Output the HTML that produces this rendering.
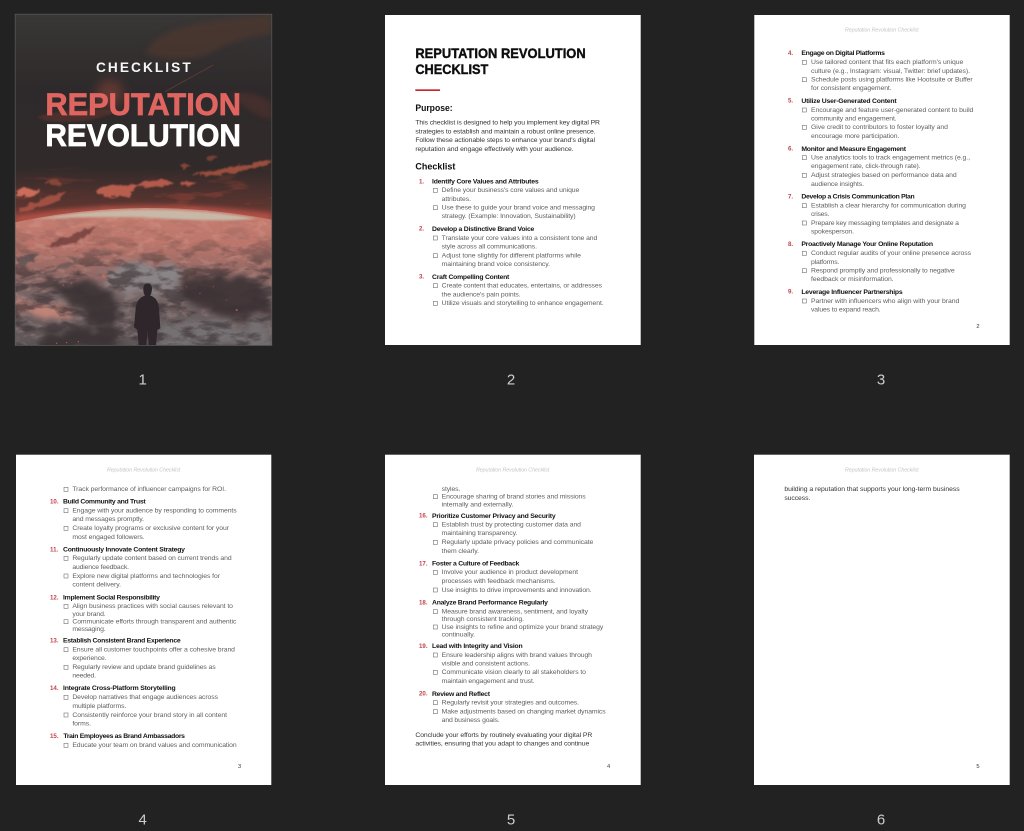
<!DOCTYPE html>
<html lang="en"><head><meta charset="utf-8"><title>Reputation Revolution Checklist</title>
<style>
html,body{margin:0;padding:0;background:#222;width:1024px;height:831px;overflow:hidden}
svg{display:block}
text{font-family:"Liberation Sans",sans-serif;dominant-baseline:central;white-space:pre}
.b{font-size:20.500px;fill:#5e5e5e;dominant-baseline:middle}
.t{font-size:20.500px;font-weight:700;fill:#141414;dominant-baseline:middle}
.n{font-size:18.500px;font-weight:700;fill:#c2434c;dominant-baseline:middle}
.h{font-size:16px;font-style:italic;fill:#c4c4c4;dominant-baseline:middle}
.p{font-size:20.500px;fill:#343434;dominant-baseline:middle}
.pg{font-size:17px;fill:#333}
.l{font-size:15px;fill:#cdcdcd;text-anchor:middle}
.x{fill:none;stroke:#6a6a6a;stroke-width:1.7}
.tx{filter:url(#soft)}
</style></head>
<body>
<svg width="1024" height="831" viewBox="0 0 1024 831" xmlns="http://www.w3.org/2000/svg">
<defs>
<filter id="soft" x="-2%" y="-2%" width="104%" height="104%"><feGaussianBlur stdDeviation=".9"/></filter>
<filter id="b3" x="-30%" y="-30%" width="160%" height="160%"><feGaussianBlur stdDeviation="3"/></filter>
<filter id="b8" x="-30%" y="-30%" width="160%" height="160%"><feGaussianBlur stdDeviation="8"/></filter>
<filter id="b16" x="-40%" y="-40%" width="180%" height="180%"><feGaussianBlur stdDeviation="16"/></filter>
<filter id="rough" x="-5%" y="-5%" width="110%" height="110%" color-interpolation-filters="sRGB">
<feTurbulence type="fractalNoise" baseFrequency=".035 .06" numOctaves="4" seed="4" result="n"/>
<feDisplacementMap in="SourceGraphic" in2="n" scale="22" xChannelSelector="R" yChannelSelector="G"/>
<feGaussianBlur stdDeviation="2.500"/></filter>
<filter id="roughB" x="-5%" y="-5%" width="110%" height="110%" color-interpolation-filters="sRGB">
<feTurbulence type="fractalNoise" baseFrequency=".02 .035" numOctaves="5" seed="11" result="n"/>
<feDisplacementMap in="SourceGraphic" in2="n" scale="70" xChannelSelector="R" yChannelSelector="G"/>
<feGaussianBlur stdDeviation="9"/></filter>
<filter id="cl" x="0" y="0" width="100%" height="100%" color-interpolation-filters="sRGB">
<feTurbulence type="fractalNoise" baseFrequency=".008 .04" numOctaves="5" seed="8"/>
<feColorMatrix values="0 0 0 0 .56 0 0 0 0 .26 0 0 0 0 .22 6 0 0 0 -3.500"/></filter>
<filter id="dk" x="0" y="0" width="100%" height="100%" color-interpolation-filters="sRGB">
<feTurbulence type="fractalNoise" baseFrequency=".012 .03" numOctaves="5" seed="21"/>
<feColorMatrix values="0 0 0 0 .24 0 0 0 0 .20 0 0 0 0 .21 6 0 0 0 -2.800"/></filter>
<filter id="wh" x="0" y="0" width="100%" height="100%" color-interpolation-filters="sRGB">
<feTurbulence type="fractalNoise" baseFrequency=".03 .06" numOctaves="4" seed="5"/>
<feColorMatrix values="0 0 0 0 .88 0 0 0 0 .70 0 0 0 0 .65 5 0 0 0 -2.500"/></filter>
<linearGradient id="sky" x1="0" y1="0" x2="0" y2="1">
<stop offset="0" stop-color="#393636"/><stop offset=".35" stop-color="#2e2a2b"/><stop offset=".72" stop-color="#312a2a"/><stop offset=".9" stop-color="#5c3530"/><stop offset="1" stop-color="#b04e44"/></linearGradient>
<linearGradient id="earth" x1="0" y1="0" x2="0" y2="1">
<stop offset="0" stop-color="#c87f72"/><stop offset=".25" stop-color="#bd766b"/><stop offset=".45" stop-color="#976a65"/><stop offset=".65" stop-color="#726364"/><stop offset="1" stop-color="#5c5557"/></linearGradient>
<linearGradient id="mk" x1="0" y1="0" x2="0" y2="1"><stop offset="0" stop-color="#000"/><stop offset=".7" stop-color="#000"/><stop offset=".84" stop-color="#888"/><stop offset="1" stop-color="#aaa"/></linearGradient>
<mask id="mSky" maskUnits="userSpaceOnUse" x="45" y="42" width="770" height="640"><rect x="45" y="42" width="770" height="640" fill="url(#mk)"/></mask>
<linearGradient id="mk2" x1="0" y1="0" x2="0" y2="1"><stop offset="0" stop-color="#000"/><stop offset=".2" stop-color="#333"/><stop offset=".5" stop-color="#fff"/></linearGradient>
<mask id="mDk" maskUnits="userSpaceOnUse" x="45" y="625" width="770" height="411"><rect x="45" y="625" width="770" height="411" fill="url(#mk2)"/></mask>
<clipPath id="cov"><rect x="45" y="42" width="770" height="994"/></clipPath>
<clipPath id="glob"><path d="M45 667Q430 585 815 659V1036H45Z"/></clipPath>
</defs>
<rect width="1024" height="831" fill="#222"/>

<!-- Cover -->
<g transform="scale(.33333)">
<g clip-path="url(#cov)">
<rect x="45" y="42" width="770" height="640" fill="url(#sky)"/>
<path d="M435 160Q470 90 600 70Q720 50 815 45V100Q700 115 620 165Q520 190 435 160Z" fill="#50382f" opacity=".7" filter="url(#b8)"/>
<path d="M690 280Q770 270 815 310V360Q740 340 690 280Z" fill="#4e332d" opacity=".7" filter="url(#b8)"/>
<path d="M110 350Q220 320 360 330Q280 370 190 365Q140 370 110 350Z" fill="#5e352e" opacity=".6" filter="url(#b3)"/>
<circle cx="330" cy="280" r="40" fill="#8c4538" opacity=".55" filter="url(#b16)"/>
<path d="M495 275L640 195" stroke="#6e453c" stroke-width="2.500" opacity=".7"/>
<rect x="45" y="42" width="770" height="640" filter="url(#cl)" mask="url(#mSky)"/>
<g filter="url(#rough)" fill="#a85346">
<path d="M48 572Q85 560 115 568L108 585Q75 592 48 588Z" fill="#cc6c5a"/>
<path d="M60 625Q140 590 200 575L180 600Q120 625 60 640Z" opacity=".9"/>
<path d="M290 565Q340 555 410 550L390 590Q330 595 290 580Z" fill="#b85e4e"/>
<path d="M410 550Q470 535 530 548L500 560Q450 560 410 560Z" fill="#b45a4b"/>
<path d="M540 548Q570 540 590 545L570 560L540 560Z" fill="#b0584a"/>
<path d="M580 520Q680 505 810 478L805 495Q700 520 620 530Z" fill="#9a4e3e"/>
<path d="M540 495Q565 490 575 495L550 510Z" fill="#86463a"/>
<path d="M620 470Q640 465 655 470L630 485Z" fill="#724036"/>
<path d="M135 545Q165 535 190 550L150 555Z" fill="#864639"/>
</g>
<path d="M45 652Q430 585 815 643V665H45Z" fill="#bd5549" opacity=".85" filter="url(#b8)"/>
<path d="M45 667Q430 585 815 659V1036H45Z" fill="url(#earth)"/>
<g clip-path="url(#glob)">
<rect x="45" y="620" width="770" height="416" filter="url(#wh)" opacity=".2"/>
<g filter="url(#roughB)">
<path d="M300 815Q440 770 530 800Q560 850 510 890Q430 890 340 860Z" fill="#8a8486"/>
<path d="M170 860Q250 830 330 870Q370 940 340 985Q250 950 190 900Z" fill="#403739"/>
<path d="M110 1000Q220 970 340 990L390 1050H120Z" fill="#3e3638"/>
<path d="M540 840Q640 800 740 845Q815 865 815 945Q740 945 690 955Q590 930 540 875Z" fill="#433739"/>
<path d="M48 910Q110 885 200 935L220 960Q130 950 48 945Z" fill="#c08479"/>
<path d="M480 980Q610 940 815 985V1045H480Z" fill="#757072"/>
</g>
<rect x="45" y="625" width="770" height="411" filter="url(#dk)" mask="url(#mDk)" opacity=".65"/>
<path d="M90 660Q430 600 770 655Q680 668 430 652Q220 648 90 660Z" fill="#c9bcaa" opacity=".95" filter="url(#b3)"/>
<g filter="url(#rough)" opacity=".75">
<path d="M130 740Q200 705 290 680L280 690Q260 720 200 735Z" fill="#693a38"/>
<path d="M48 775Q90 755 118 758L100 785L50 800Z" fill="#544c50"/>
<path d="M48 850Q160 805 250 770L215 795Q120 830 48 860Z" fill="#655355"/>
<path d="M290 822Q340 812 395 818L350 826Z" fill="#4a4447"/>
</g>
<circle cx="311" cy="827" r="5" fill="#e0705c" filter="url(#b3)"/>
<g fill="#d8604e" opacity=".8"><circle cx="215" cy="850" r="2"/><circle cx="190" cy="855" r="2"/><circle cx="560" cy="860" r="1.600"/><circle cx="600" cy="880" r="1.600"/><circle cx="640" cy="860" r="1.600"/><circle cx="680" cy="900" r="1.600"/><circle cx="710" cy="930" r="3"/><circle cx="170" cy="1030" r="2"/><circle cx="200" cy="1028" r="2"/><circle cx="235" cy="1025" r="2"/></g>
</g>
<path d="M430 868Q430 850 443 850Q456 850 456 868Q455 880 450 887Q474 893 477 925L481 985L472 990L468 1036H446L443 992L439 1036H416L412 990L402 982L407 925Q410 895 435 887Q430 880 430 868Z" fill="#2d282b" filter="url(#soft)"/>
</g>
<rect x="45.500" y="42.500" width="770" height="994" fill="none" stroke="#5d5d5d" stroke-width="2"/>
<g filter="url(#soft)">
<text x="288" y="203" font-size="41" font-weight="700" fill="#f6f6f6" textLength="284" lengthAdjust="spacing">CHECKLIST</text>
<text x="136" y="312" font-size="95" font-weight="700" fill="#e06561" stroke="#e06561" stroke-width="2" textLength="587" lengthAdjust="spacingAndGlyphs">REPUTATION</text>
<text x="136" y="405" font-size="95" font-weight="700" fill="#fff" stroke="#fff" stroke-width="2" textLength="587" lengthAdjust="spacingAndGlyphs">REVOLUTION</text>
</g>
</g>

<!-- Page 2 -->
<rect x="385" y="15" width="255.700" height="330" fill="#fff"/>
<g transform="translate(380 10) scale(.33333)" class="tx">
<text x="106" y="130" font-size="41" font-weight="700" fill="#111" stroke="#111" stroke-width="1.200" textLength="511" lengthAdjust="spacingAndGlyphs">REPUTATION REVOLUTION</text>
<text x="106" y="178" font-size="41" font-weight="700" fill="#111" stroke="#111" stroke-width="1.200" textLength="219" lengthAdjust="spacingAndGlyphs">CHECKLIST</text>
<rect x="106" y="238" width="74" height="5" fill="#c9252d"/>
<text x="106" y="294" font-size="27" font-weight="700" fill="#111" textLength="112" lengthAdjust="spacingAndGlyphs">Purpose:</text>
<text class="p" x="106" y="338" textLength="554">This checklist is designed to help you implement key digital PR</text>
<text class="p" x="106" y="365" textLength="541">strategies to establish and maintain a robust online presence.</text>
<text class="p" x="106" y="391" textLength="539">Follow these actionable steps to enhance your brand's digital</text>
<text class="p" x="106" y="417" textLength="475">reputation and engage effectively with your audience.</text>
<text x="106" y="469" font-size="27" font-weight="700" fill="#111" textLength="120" lengthAdjust="spacingAndGlyphs">Checklist</text>
<text class="n" x="117" y="515">1.</text><text class="t" x="156" y="515" textLength="320">Identify Core Values and Attributes</text>
<rect class="x" x="160" y="535" width="12" height="12"/><text class="b" x="185" y="541" textLength="413">Define your business's core values and unique</text>
<text class="b" x="185" y="567" textLength="88">attributes.</text>
<rect class="x" x="160" y="587" width="12" height="12"/><text class="b" x="185" y="593" textLength="460">Use these to guide your brand voice and messaging</text>
<text class="b" x="185" y="619" textLength="402">strategy. (Example: Innovation, Sustainability)</text>
<text class="n" x="117" y="657">2.</text><text class="t" x="156" y="657" textLength="307">Develop a Distinctive Brand Voice</text>
<rect class="x" x="160" y="678" width="12" height="12"/><text class="b" x="185" y="684" textLength="467">Translate your core values into a consistent tone and</text>
<text class="b" x="185" y="710" textLength="286">style across all communications.</text>
<rect class="x" x="160" y="731" width="12" height="12"/><text class="b" x="185" y="737" textLength="418">Adjust tone slightly for different platforms while</text>
<text class="b" x="185" y="763" textLength="325">maintaining brand voice consistency.</text>
<text class="n" x="117" y="801">3.</text><text class="t" x="156" y="801" textLength="232">Craft Compelling Content</text>
<rect class="x" x="160" y="821" width="12" height="12"/><text class="b" x="185" y="827" textLength="481">Create content that educates, entertains, or addresses</text>
<text class="b" x="185" y="854" textLength="237">the audience's pain points.</text>
<rect class="x" x="160" y="874" width="12" height="12"/><text class="b" x="185" y="880" textLength="486">Utilize visuals and storytelling to enhance engagement.</text>
</g>

<!-- Page 3 -->
<rect x="754.300" y="15" width="255.400" height="330" fill="#fff"/>
<g transform="translate(750 10) scale(.33333)" class="tx">
<text class="h" x="285" y="61" textLength="221">Reputation Revolution Checklist</text>
<text class="n" x="114" y="130">4.</text><text class="t" x="154" y="130" textLength="251">Engage on Digital Platforms</text>
<rect class="x" x="157" y="151" width="12" height="12"/><text class="b" x="183" y="157" textLength="457">Use tailored content that fits each platform's unique</text>
<text class="b" x="183" y="183" textLength="477">culture (e.g., Instagram: visual, Twitter: brief updates).</text>
<rect class="x" x="157" y="203" width="12" height="12"/><text class="b" x="183" y="209" textLength="485">Schedule posts using platforms like Hootsuite or Buffer</text>
<text class="b" x="183" y="235" textLength="242">for consistent engagement.</text>
<text class="n" x="114" y="273">5.</text><text class="t" x="154" y="273" textLength="286">Utilize User-Generated Content</text>
<rect class="x" x="157" y="294" width="12" height="12"/><text class="b" x="183" y="300" textLength="487">Encourage and feature user-generated content to build</text>
<text class="b" x="183" y="326" textLength="257">community and engagement.</text>
<rect class="x" x="157" y="346" width="12" height="12"/><text class="b" x="183" y="352" textLength="411">Give credit to contributors to foster loyalty and</text>
<text class="b" x="183" y="378" textLength="265">encourage more participation.</text>
<text class="n" x="114" y="417">6.</text><text class="t" x="154" y="417" textLength="314">Monitor and Measure Engagement</text>
<rect class="x" x="157" y="437" width="12" height="12"/><text class="b" x="183" y="443" textLength="477">Use analytics tools to track engagement metrics (e.g.,</text>
<text class="b" x="183" y="469" textLength="329">engagement rate, click-through rate).</text>
<rect class="x" x="157" y="490" width="12" height="12"/><text class="b" x="183" y="496" textLength="437">Adjust strategies based on performance data and</text>
<text class="b" x="183" y="522" textLength="159">audience insights.</text>
<text class="n" x="114" y="560">7.</text><text class="t" x="154" y="560" textLength="340">Develop a Crisis Communication Plan</text>
<rect class="x" x="157" y="581" width="12" height="12"/><text class="b" x="183" y="587" textLength="465">Establish a clear hierarchy for communication during</text>
<text class="b" x="183" y="613" textLength="55">crises.</text>
<rect class="x" x="157" y="633" width="12" height="12"/><text class="b" x="183" y="639" textLength="444">Prepare key messaging templates and designate a</text>
<text class="b" x="183" y="665" textLength="129">spokesperson.</text>
<text class="n" x="114" y="703">8.</text><text class="t" x="154" y="703" textLength="395">Proactively Manage Your Online Reputation</text>
<rect class="x" x="157" y="724" width="12" height="12"/><text class="b" x="183" y="730" textLength="480">Conduct regular audits of your online presence across</text>
<text class="b" x="183" y="756" textLength="85">platforms.</text>
<rect class="x" x="157" y="776" width="12" height="12"/><text class="b" x="183" y="782" textLength="431">Respond promptly and professionally to negative</text>
<text class="b" x="183" y="808" textLength="248">feedback or misinformation.</text>
<text class="n" x="114" y="846">9.</text><text class="t" x="154" y="846" textLength="304">Leverage Influencer Partnerships</text>
<rect class="x" x="157" y="867" width="12" height="12"/><text class="b" x="183" y="873" textLength="445">Partner with influencers who align with your brand</text>
<text class="b" x="183" y="899" textLength="209">values to expand reach.</text>
<text class="pg" x="679" y="951">2</text>
</g>

<!-- Page 4 -->
<rect x="16" y="454.700" width="255.300" height="330.300" fill="#fff"/>
<g transform="translate(10 450) scale(.33333)" class="tx">
<text class="h" x="291" y="60" textLength="220">Reputation Revolution Checklist</text>
<rect class="x" x="162" y="112" width="12" height="12"/><text class="b" x="187" y="118" textLength="461">Track performance of influencer campaigns for ROI.</text>
<text class="n" x="120" y="155">10.</text><text class="t" x="159" y="155" textLength="248">Build Community and Trust</text>
<rect class="x" x="162" y="176" width="12" height="12"/><text class="b" x="187" y="182" textLength="493">Engage with your audience by responding to comments</text>
<text class="b" x="187" y="208" textLength="215">and messages promptly.</text>
<rect class="x" x="162" y="229" width="12" height="12"/><text class="b" x="187" y="235" textLength="470">Create loyalty programs or exclusive content for your</text>
<text class="b" x="187" y="261" textLength="217">most engaged followers.</text>
<text class="n" x="120" y="299">11.</text><text class="t" x="159" y="299" textLength="366">Continuously Innovate Content Strategy</text>
<rect class="x" x="162" y="319" width="12" height="12"/><text class="b" x="187" y="325" textLength="478">Regularly update content based on current trends and</text>
<text class="b" x="187" y="351" textLength="170">audience feedback.</text>
<rect class="x" x="162" y="372" width="12" height="12"/><text class="b" x="187" y="378" textLength="443">Explore new digital platforms and technologies for</text>
<text class="b" x="187" y="404" textLength="146">content delivery.</text>
<text class="n" x="120" y="443">12.</text><text class="t" x="159" y="443" textLength="291">Implement Social Responsibility</text>
<rect class="x" x="162" y="463" width="12" height="12"/><text class="b" x="187" y="469" textLength="482">Align business practices with social causes relevant to</text>
<text class="b" x="187" y="492" textLength="100">your brand.</text>
<rect class="x" x="162" y="509" width="12" height="12"/><text class="b" x="187" y="515" textLength="492">Communicate efforts through transparent and authentic</text>
<text class="b" x="187" y="538" textLength="100">messaging.</text>
<text class="n" x="120" y="572">13.</text><text class="t" x="159" y="572" textLength="353">Establish Consistent Brand Experience</text>
<rect class="x" x="162" y="593" width="12" height="12"/><text class="b" x="187" y="599" textLength="488">Ensure all customer touchpoints offer a cohesive brand</text>
<text class="b" x="187" y="625" textLength="103">experience.</text>
<rect class="x" x="162" y="646" width="12" height="12"/><text class="b" x="187" y="652" textLength="430">Regularly review and update brand guidelines as</text>
<text class="b" x="187" y="677" textLength="71">needed.</text>
<text class="n" x="120" y="715">14.</text><text class="t" x="159" y="715" textLength="338">Integrate Cross-Platform Storytelling</text>
<rect class="x" x="162" y="736" width="12" height="12"/><text class="b" x="187" y="742" textLength="437">Develop narratives that engage audiences across</text>
<text class="b" x="187" y="768" textLength="162">multiple platforms.</text>
<rect class="x" x="162" y="789" width="12" height="12"/><text class="b" x="187" y="795" textLength="464">Consistently reinforce your brand story in all content</text>
<text class="b" x="187" y="821" textLength="56">forms.</text>
<text class="n" x="120" y="859">15.</text><text class="t" x="160" y="859" textLength="365">Train Employees as Brand Ambassadors</text>
<rect class="x" x="162" y="880" width="12" height="12"/><text class="b" x="187" y="886" textLength="493">Educate your team on brand values and communication</text>
<text class="pg" x="684" y="951">3</text>
</g>

<!-- Page 5 -->
<rect x="385" y="454.700" width="255.700" height="330.300" fill="#fff"/>
<g transform="translate(380 450) scale(.33333)" class="tx">
<text class="h" x="288" y="60" textLength="220">Reputation Revolution Checklist</text>
<text class="b" x="185" y="117" textLength="56">styles.</text>
<rect class="x" x="160" y="134" width="12" height="12"/><text class="b" x="185" y="140" textLength="432">Encourage sharing of brand stories and missions</text>
<text class="b" x="185" y="164" textLength="215">internally and externally.</text>
<text class="n" x="117" y="198">16.</text><text class="t" x="156" y="198" textLength="371">Prioritize Customer Privacy and Security</text>
<rect class="x" x="160" y="218" width="12" height="12"/><text class="b" x="185" y="224" textLength="418">Establish trust by protecting customer data and</text>
<text class="b" x="185" y="250" textLength="227">maintaining transparency.</text>
<rect class="x" x="160" y="271" width="12" height="12"/><text class="b" x="185" y="277" textLength="455">Regularly update privacy policies and communicate</text>
<text class="b" x="185" y="303" textLength="112">them clearly.</text>
<text class="n" x="117" y="341">17.</text><text class="t" x="156" y="341" textLength="262">Foster a Culture of Feedback</text>
<rect class="x" x="160" y="361" width="12" height="12"/><text class="b" x="185" y="367" textLength="409">Involve your audience in product development</text>
<text class="b" x="185" y="393" textLength="342">processes with feedback mechanisms.</text>
<rect class="x" x="160" y="414" width="12" height="12"/><text class="b" x="185" y="420" textLength="450">Use insights to drive improvements and innovation.</text>
<text class="n" x="117" y="458">18.</text><text class="t" x="156" y="458" textLength="348">Analyze Brand Performance Regularly</text>
<rect class="x" x="160" y="479" width="12" height="12"/><text class="b" x="185" y="485" textLength="439">Measure brand awareness, sentiment, and loyalty</text>
<text class="b" x="185" y="508" textLength="247">through consistent tracking.</text>
<rect class="x" x="160" y="525" width="12" height="12"/><text class="b" x="185" y="531" textLength="485">Use insights to refine and optimize your brand strategy</text>
<text class="b" x="185" y="554" textLength="100">continually.</text>
<text class="n" x="117" y="589">19.</text><text class="t" x="156" y="589" textLength="272">Lead with Integrity and Vision</text>
<rect class="x" x="160" y="609" width="12" height="12"/><text class="b" x="185" y="615" textLength="451">Ensure leadership aligns with brand values through</text>
<text class="b" x="185" y="641" textLength="265">visible and consistent actions.</text>
<rect class="x" x="160" y="661" width="12" height="12"/><text class="b" x="185" y="667" textLength="433">Communicate vision clearly to all stakeholders to</text>
<text class="b" x="185" y="693" textLength="279">maintain engagement and trust.</text>
<text class="n" x="117" y="732">20.</text><text class="t" x="156" y="732" textLength="174">Review and Reflect</text>
<rect class="x" x="160" y="752" width="12" height="12"/><text class="b" x="185" y="758" textLength="412">Regularly revisit your strategies and outcomes.</text>
<rect class="x" x="160" y="779" width="12" height="12"/><text class="b" x="185" y="785" textLength="492">Make adjustments based on changing market dynamics</text>
<text class="b" x="185" y="811" textLength="174">and business goals.</text>
<text class="p" x="106" y="855" textLength="531">Conclude your efforts by routinely evaluating your digital PR</text>
<text class="p" x="106" y="881" textLength="522">activities, ensuring that you adapt to changes and continue</text>
<text class="pg" x="681" y="951">4</text>
</g>

<!-- Page 6 -->
<rect x="754" y="454.700" width="255.700" height="330.300" fill="#fff"/>
<g transform="translate(750 450) scale(.33333)" class="tx">
<text class="h" x="285" y="60" textLength="221">Reputation Revolution Checklist</text>
<text class="p" x="103" y="118" textLength="526">building a reputation that supports your long-term business</text>
<text class="p" x="103" y="144" textLength="78">success.</text>
<text class="pg" x="679" y="951">5</text>
</g>

<!-- Thumbnail labels -->
<text class="l" x="142.700" y="380">1</text>
<text class="l" x="511" y="380">2</text>
<text class="l" x="881" y="380">3</text>
<text class="l" x="142.700" y="820">4</text>
<text class="l" x="511" y="820">5</text>
<text class="l" x="881" y="820">6</text>
</svg>
</body></html>
